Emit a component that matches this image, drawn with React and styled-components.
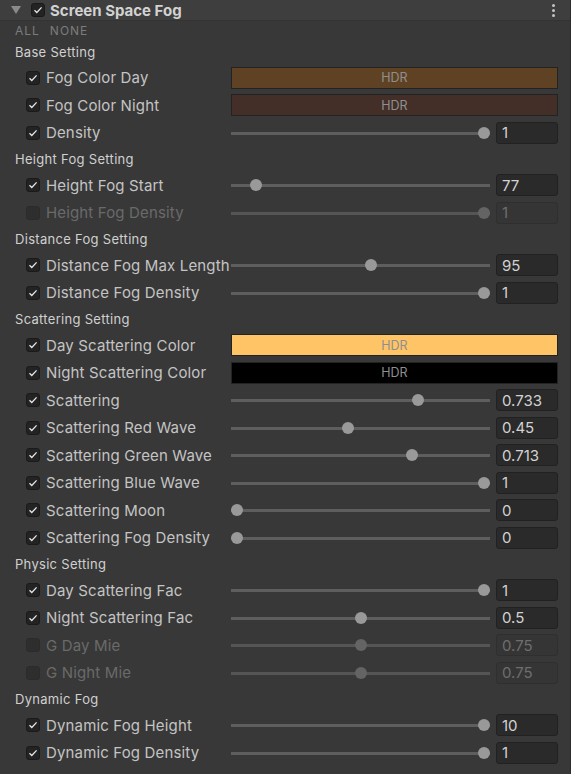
import React from 'react';
import styled, { createGlobalStyle } from 'styled-components';

const sections = [
  {
    title: 'Base Setting',
    rows: [
      { label: 'Fog Color Day', color: '#5f4223' },
      { label: 'Fog Color Night', color: '#432f28' },
      { label: 'Density', pos: 1, value: '1' },
    ],
  },
  {
    title: 'Height Fog Setting',
    rows: [
      { label: 'Height Fog Start', pos: 0.075, value: '77' },
      { label: 'Height Fog Density', pos: 1, value: '1', disabled: true },
    ],
  },
  {
    title: 'Distance Fog Setting',
    rows: [
      { label: 'Distance Fog Max Length', pos: 0.544, value: '95' },
      { label: 'Distance Fog Density', pos: 1, value: '1' },
    ],
  },
  {
    title: 'Scattering Setting',
    rows: [
      { label: 'Day Scattering Color', color: '#ffc466' },
      { label: 'Night Scattering Color', color: '#000000' },
      { label: 'Scattering', pos: 0.733, value: '0.733' },
      { label: 'Scattering Red Wave', pos: 0.448, value: '0.45' },
      { label: 'Scattering Green Wave', pos: 0.71, value: '0.713' },
      { label: 'Scattering Blue Wave', pos: 1, value: '1' },
      { label: 'Scattering Moon', pos: 0, value: '0' },
      { label: 'Scattering Fog Density', pos: 0, value: '0' },
    ],
  },
  {
    title: 'Physic Setting',
    rows: [
      { label: 'Day Scattering Fac', pos: 1, value: '1' },
      { label: 'Night Scattering Fac', pos: 0.5, value: '0.5' },
      { label: 'G Day Mie', pos: 0.5, value: '0.75', disabled: true },
      { label: 'G Night Mie', pos: 0.5, value: '0.75', disabled: true },
    ],
  },
  {
    title: 'Dynamic Fog',
    rows: [
      { label: 'Dynamic Fog Height', pos: 1, value: '10' },
      { label: 'Dynamic Fog Density', pos: 1, value: '1' },
    ],
  },
];

const Check = () => (
  <svg width="10" height="10" viewBox="0 0 10 10">
    <path d="M1.5 5.2 L3.8 7.5 L8.6 2.4" fill="none" stroke="#e6e6e6" strokeWidth="1.3" />
  </svg>
);

const App = () => {
  return (
    <>
      <GlobalStyle />
      <Panel>
        <Header>
          <Foldout />
          <CheckBox>
            <Check />
          </CheckBox>
          <Title>Screen Space Fog</Title>
          <Kebab>
            <span />
            <span />
            <span />
          </Kebab>
        </Header>
        <Toolbar>
          <span>ALL</span>
          <span>NONE</span>
        </Toolbar>
        {sections.map((section) => (
          <div key={section.title}>
            <SectionTitle>{section.title}</SectionTitle>
            {section.rows.map((row) => (
              <Row key={row.label}>
                <CheckBox $disabled={row.disabled}>{!row.disabled && <Check />}</CheckBox>
                <Label $disabled={row.disabled}>{row.label}</Label>
                {row.color ? (
                  <ColorField $color={row.color}>HDR</ColorField>
                ) : (
                  <Control>
                    <Slider>
                      <Track $disabled={row.disabled} />
                      <Thumb
                        $disabled={row.disabled}
                        style={{ left: `calc(${row.pos} * (100% - 12px))` }}
                      />
                    </Slider>
                    <NumberField $disabled={row.disabled}>{row.value}</NumberField>
                  </Control>
                )}
              </Row>
            ))}
          </div>
        ))}
      </Panel>
    </>
  );
};

export default App;

const GlobalStyle = createGlobalStyle`
  body {
    margin: 0;
    background: #383838;
    font-family: Inter, "Noto Sans", sans-serif;
  }
`;

const Panel = styled.div`
  width: 571px;
  height: 774px;
  background: #383838;
  box-sizing: border-box;
  border-right: 1px solid #2c2c2c;
  overflow: hidden;
`;

const Header = styled.div`
  height: 20px;
  display: flex;
  align-items: center;
  background: #3e3e3e;
  border-bottom: 1px solid #333333;
  padding-left: 11px;
  padding-right: 15px;
`;

const Foldout = styled.div`
  width: 0;
  height: 0;
  border-left: 5px solid transparent;
  border-right: 5px solid transparent;
  border-top: 8px solid #8a8a8a;
  margin-right: 10px;
`;

const Title = styled.div`
  margin-left: 5px;
  font-size: 15px;
  font-weight: 700;
  color: #d2d2d2;
  flex: 1;
`;

const Kebab = styled.div`
  display: flex;
  flex-direction: column;
  gap: 2px;

  span {
    width: 3px;
    height: 3px;
    border-radius: 50%;
    background: #c4c4c4;
  }
`;

const Toolbar = styled.div`
  height: 18px;
  display: flex;
  align-items: center;
  gap: 10px;
  padding-left: 15px;
  font-size: 12px;
  letter-spacing: 1px;
  color: #7c7c7c;
`;

const SectionTitle = styled.div`
  height: 25px;
  display: flex;
  align-items: center;
  padding-left: 15px;
  font-size: 13px;
  letter-spacing: 0.3px;
  color: #d0d0d0;
`;

const Row = styled.div`
  height: 27.5px;
  display: flex;
  align-items: center;
  padding-left: 26px;
  padding-right: 12px;
`;

const CheckBox = styled.div`
  width: 14px;
  height: 14px;
  box-sizing: border-box;
  flex-shrink: 0;
  display: flex;
  align-items: center;
  justify-content: center;
  border-radius: 3px;
  background: ${(p) => (p.$disabled ? '#2e2e2e' : '#232323')};
  border: 1px solid ${(p) => (p.$disabled ? '#2b2b2b' : '#1a1a1a')};
`;

const Label = styled.div`
  width: 185px;
  margin-left: 6px;
  flex-shrink: 0;
  white-space: nowrap;
  font-size: 15px;
  letter-spacing: 0.15px;
  color: ${(p) => (p.$disabled ? '#6a6a6a' : '#c4c4c4')};
`;

const ColorField = styled.div`
  flex: 1;
  height: 22px;
  box-sizing: border-box;
  display: flex;
  align-items: center;
  justify-content: center;
  border: 1px solid #232323;
  background: ${(p) => p.$color};
  font-size: 12.5px;
  color: #8f8f8f;
`;

const Control = styled.div`
  flex: 1;
  display: flex;
  align-items: center;
  gap: 6px;
`;

const Slider = styled.div`
  flex: 1;
  height: 14px;
  position: relative;
`;

const Track = styled.div`
  position: absolute;
  left: 0;
  right: 0;
  top: 6px;
  height: 3px;
  background: ${(p) => (p.$disabled ? '#555555' : '#5e5e5e')};
`;

const Thumb = styled.div`
  position: absolute;
  top: 1px;
  width: 12px;
  height: 12px;
  border-radius: 50%;
  background: ${(p) => (p.$disabled ? '#646464' : '#999999')};
`;

const NumberField = styled.div`
  width: 62px;
  height: 22px;
  box-sizing: border-box;
  display: flex;
  align-items: center;
  padding-left: 5px;
  border-radius: 3px;
  font-size: 15px;
  background: ${(p) => (p.$disabled ? '#353535' : '#2a2a2a')};
  border: 1px solid ${(p) => (p.$disabled ? '#2f2f2f' : '#212121')};
  color: ${(p) => (p.$disabled ? '#6e6e6e' : '#d2d2d2')};
`;
